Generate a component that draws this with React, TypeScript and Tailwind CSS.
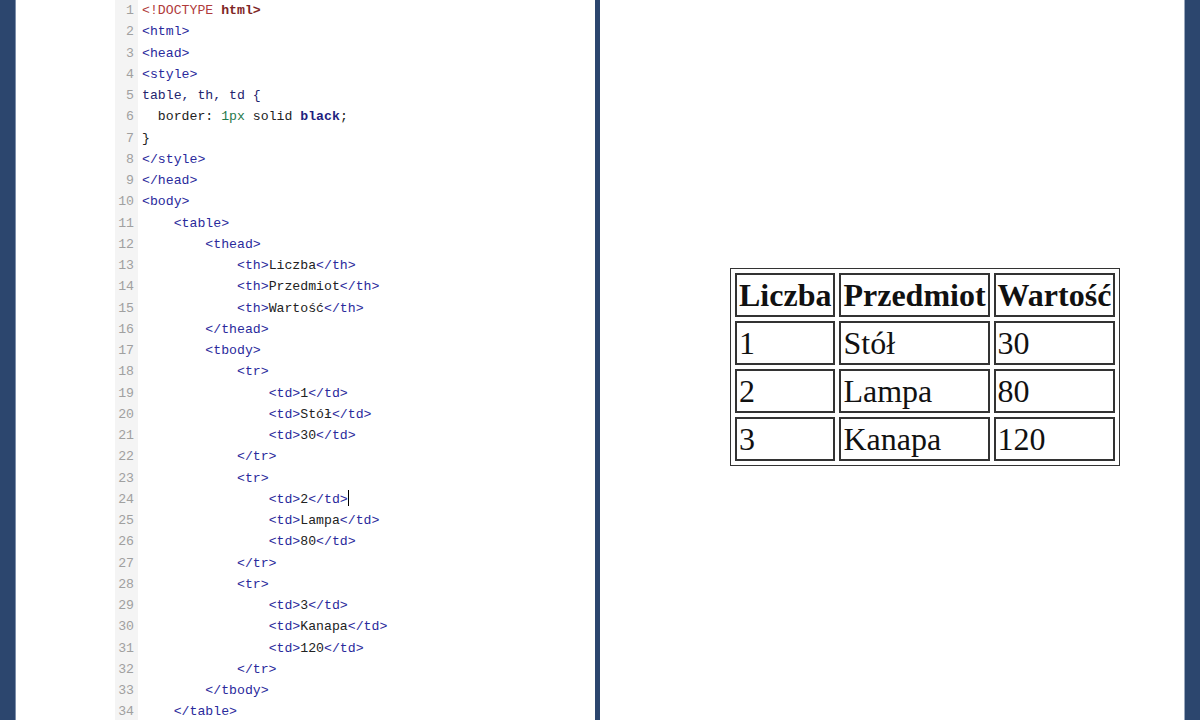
import React from 'react'

type Seg = [string, string]

const TAG = 'text-[#2a2a9c]'
const TXT = 'text-[#222]'

const t = (indent: number, s: string): Seg[] => {
  // split "<th>Liczba</th>" into tag + text + tag
  const m = s.match(/^(<[^>]+>)([^<]*)(<[^>]+>)?$/)
  const pad: Seg = [' '.repeat(indent), TXT]
  if (!m) return [pad, [s, TAG]]
  const out: Seg[] = [pad, [m[1], TAG]]
  if (m[2]) out.push([m[2], TXT])
  if (m[3]) out.push([m[3], TAG])
  return out
}

const lines: Seg[][] = [
  [['<!DOCTYPE', 'text-[#b03a3a]'], [' html>', 'text-[#7e2626] font-bold']],
  t(0, '<html>'),
  t(0, '<head>'),
  t(0, '<style>'),
  [['table, th, td {', 'text-[#24246e]']],
  [['  border: ', TXT], ['1px', 'text-[#1f7a4c]'], [' solid ', TXT], ['black', 'text-[#1f1f80] font-bold'], [';', TXT]],
  [['}', TXT]],
  t(0, '</style>'),
  t(0, '</head>'),
  t(0, '<body>'),
  t(4, '<table>'),
  t(8, '<thead>'),
  t(12, '<th>Liczba</th>'),
  t(12, '<th>Przedmiot</th>'),
  t(12, '<th>Wartość</th>'),
  t(8, '</thead>'),
  t(8, '<tbody>'),
  t(12, '<tr>'),
  t(16, '<td>1</td>'),
  t(16, '<td>Stół</td>'),
  t(16, '<td>30</td>'),
  t(12, '</tr>'),
  t(12, '<tr>'),
  t(16, '<td>2</td>'),
  t(16, '<td>Lampa</td>'),
  t(16, '<td>80</td>'),
  t(12, '</tr>'),
  t(12, '<tr>'),
  t(16, '<td>3</td>'),
  t(16, '<td>Kanapa</td>'),
  t(16, '<td>120</td>'),
  t(12, '</tr>'),
  t(8, '</tbody>'),
  t(4, '</table>'),
]

const rows = [
  ['1', 'Stół', '30'],
  ['2', 'Lampa', '80'],
  ['3', 'Kanapa', '120'],
]

export default function App() {
  return (
    <div className="w-[1200px] h-[720px] overflow-hidden bg-[#2c466e] flex">
      {/* editor panel */}
      <div className="ml-[15px] w-[580px] h-full bg-white border-l border-[#7d8fab] flex">
        <div className="w-[99px]" />
        <div
          className="w-[23px] bg-[#f4f4f4] text-right pr-[4px] text-[#a0a0a0] text-[13.2px] leading-[21.25px]"
          style={{ fontFamily: '"Liberation Mono", monospace' }}
        >
          {lines.map((_, i) => (
            <div key={i}>{i + 1}</div>
          ))}
        </div>
        <div
          className="pl-[4px] text-[13.2px] leading-[21.25px] whitespace-pre"
          style={{ fontFamily: '"Liberation Mono", monospace' }}
        >
          {lines.map((segs, i) => (
            <div key={i} className="relative">
              {segs.map(([s, c], j) => (
                <span key={j} className={c}>{s}</span>
              ))}
              {i === 23 && <span className="inline-block w-px h-[16px] bg-black align-[-3px]" />}
            </div>
          ))}
        </div>
      </div>

      {/* preview panel */}
      <div className="ml-[5px] w-[585px] h-full bg-white border-r border-[#9aa8bd] pl-[130px] pt-[268px]">
        <table
          className="border border-[#333] border-separate border-spacing-[4px] text-[32px] text-[#111]"
          style={{ fontFamily: '"Liberation Serif", "Times New Roman", serif' }}
        >
          <thead>
            <tr>
              <th className="w-[100px] h-[44px] border-2 border-[#333] px-[2px] text-left font-bold leading-none">Liczba</th>
              <th className="w-[149px] h-[44px] border-2 border-[#333] px-[2px] text-left font-bold leading-none">Przedmiot</th>
              <th className="w-[121px] h-[44px] border-2 border-[#333] px-[2px] text-left font-bold leading-none">Wartość</th>
            </tr>
          </thead>
          <tbody>
            {rows.map((r) => (
              <tr key={r[0]}>
                {r.map((c, i) => (
                  <td key={i} className="h-[44px] border-2 border-[#333] px-[2px] leading-none">{c}</td>
                ))}
              </tr>
            ))}
          </tbody>
        </table>
      </div>
    </div>
  )
}
